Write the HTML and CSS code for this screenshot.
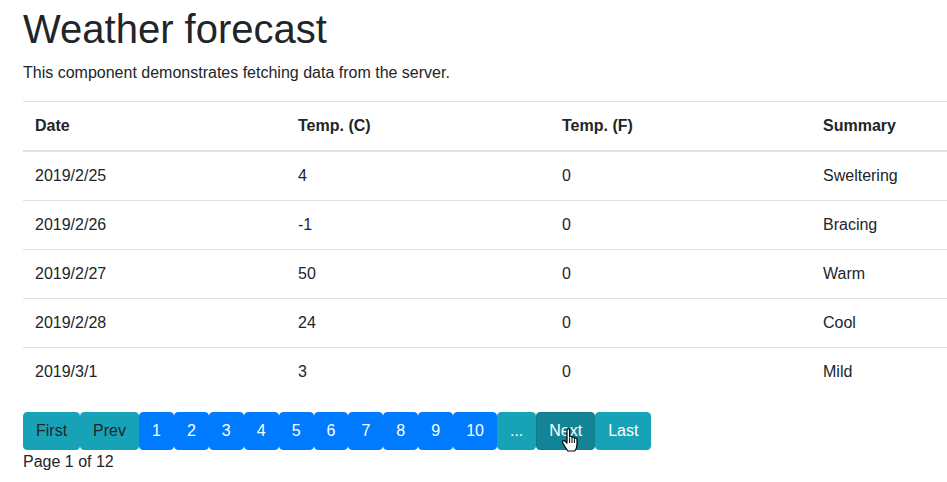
FILE: index.html
```html
<!DOCTYPE html>
<html>
<head>
<meta charset="utf-8">
<link rel="stylesheet" href="styles.css">
</head>
<body>
<div class="page">
  <h1 class="title">Weather forecast</h1>
  <p class="lead">This component demonstrates fetching data from the server.</p>
  <table class="table">
    <colgroup><col class="c1"><col class="c2"><col class="c3"><col class="c4"></colgroup>
    <thead>
      <tr><th>Date</th><th>Temp. (C)</th><th>Temp. (F)</th><th>Summary</th></tr>
    </thead>
    <tbody>
      <tr><td>2019/2/25</td><td>4</td><td>0</td><td>Sweltering</td></tr>
      <tr><td>2019/2/26</td><td>-1</td><td>0</td><td>Bracing</td></tr>
      <tr><td>2019/2/27</td><td>50</td><td>0</td><td>Warm</td></tr>
      <tr><td>2019/2/28</td><td>24</td><td>0</td><td>Cool</td></tr>
      <tr><td>2019/3/1</td><td>3</td><td>0</td><td>Mild</td></tr>
    </tbody>
  </table>
  <div class="pager">
    <span class="btn info dark">First</span>
    <span class="btn info dark">Prev</span>
    <span class="btn primary">1</span>
    <span class="btn primary">2</span>
    <span class="btn primary">3</span>
    <span class="btn primary">4</span>
    <span class="btn primary">5</span>
    <span class="btn primary">6</span>
    <span class="btn primary">7</span>
    <span class="btn primary">8</span>
    <span class="btn primary">9</span>
    <span class="btn primary">10</span>
    <span class="btn info">...</span>
    <span class="btn info hover">Next
      <svg class="cursor" width="18" height="24" viewBox="0 0 18 24"><path d="M6 2 Q6 0.7 7.3 0.7 Q8.6 0.7 8.6 2 V9 Q8.6 8 9.8 8 Q11 8 11 9.2 V10 Q11 9 12.2 9 Q13.4 9 13.4 10.2 V11 Q13.4 10 14.6 10 Q16 10 16 11.5 V16.5 Q16 20 13.8 23 H6.8 Q5 20.5 2 15.5 Q0.8 13.5 2.2 12.8 Q3.6 12.3 6 15 Z" fill="#fff" stroke="#000" stroke-width="1.2" stroke-linejoin="round"/><path d="M8.6 10 V15 M11 10.5 V15 M13.4 11.5 V15" stroke="#000" stroke-width="1"/></svg>
    </span>
    <span class="btn info">Last</span>
  </div>
  <div class="pageinfo">Page 1 of 12</div>
</div>
</body>
</html>
```
FILE: styles.css
```css
html, body {
  margin: 0;
  padding: 0;
  background: #fff;
  overflow: hidden;
}
body {
  font-family: "Liberation Sans", Arial, sans-serif;
  font-size: 16px;
  line-height: 1.5;
  color: #212529;
}
.page {
  padding: 5px 0 0 23px;
}
.title {
  margin: 0 0 8px 0;
  font-size: 40px;
  font-weight: 400;
  line-height: 1.2;
}
.lead {
  margin: 0 0 16px 0;
}
.table {
  border-collapse: collapse;
  table-layout: fixed;
  width: 924px;
  margin-bottom: 16px;
}
.c1 { width: 263px; }
.c2 { width: 264px; }
.c3 { width: 261px; }
.table th, .table td {
  padding: 12px;
  text-align: left;
  border-top: 1px solid #dee2e6;
  vertical-align: top;
  white-space: nowrap;
}
.table th {
  font-weight: 700;
  border-bottom: 2px solid #dee2e6;
}
.table tbody tr:first-child td {
  border-top: 0;
}
.pager {
  display: flex;
}
.btn {
  position: relative;
  display: inline-block;
  padding: 6px 12px;
  border: 1px solid transparent;
  border-radius: 4px;
  font-size: 16px;
  line-height: 24px;
  color: #fff;
  white-space: nowrap;
}
.primary {
  background: #007bff;
  border-color: #007bff;
}
.info {
  background: #17a2b8;
  border-color: #17a2b8;
}
.info.hover {
  background: #138496;
  border-color: #117a8b;
}
.dark {
  color: #212529;
}
.cursor {
  position: absolute;
  left: 24px;
  top: 15px;
}
.pageinfo {
  line-height: 24px;
}
```
